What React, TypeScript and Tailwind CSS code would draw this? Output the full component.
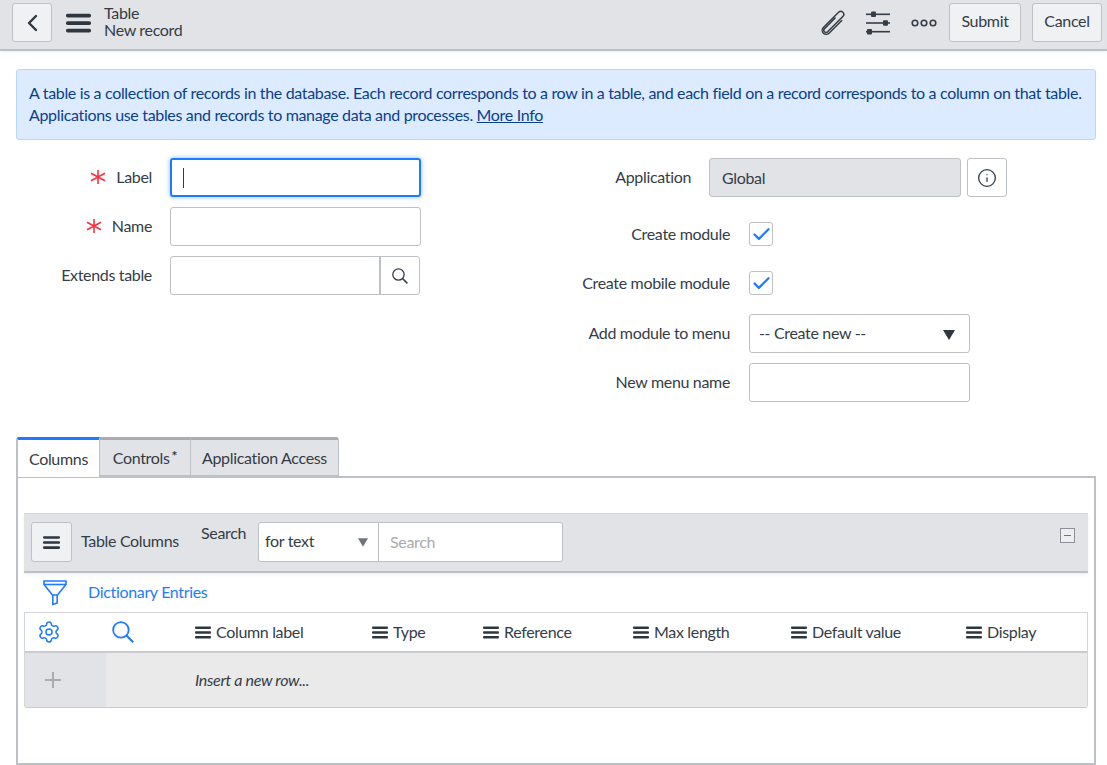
import React from 'react';
import { Check, Info, Settings } from 'lucide-react';

function Bars({ className }: { className: string }) {
  return (
    <svg viewBox="0 0 16 12" className={className}>
      <rect x="0" y="0" width="16" height="2.4" rx="1" fill="currentColor" />
      <rect x="0" y="4.8" width="16" height="2.4" rx="1" fill="currentColor" />
      <rect x="0" y="9.6" width="16" height="2.4" rx="1" fill="currentColor" />
    </svg>
  );
}

function Back() {
  return (
    <svg viewBox="0 0 12 18" className="w-[12px] h-[18px] text-[#2e3640]" fill="none" stroke="currentColor" strokeWidth="2.4" strokeLinecap="round" strokeLinejoin="round">
      <path d="M10 2 3 9l7 7" />
    </svg>
  );
}

function Paperclip() {
  return (
    <svg viewBox="0 0 26 26" className="w-[26px] h-[26px] text-[#343d47]" fill="none" stroke="currentColor" strokeWidth="1.5" strokeLinecap="round">
      <g transform="rotate(45 13 13)">
        <path d="M11 8v15a2.2 2.2 0 0 0 4.4 0V1.5a3 3 0 0 0-6 0V23a4 4 0 0 0 8 0V5" />
      </g>
    </svg>
  );
}

function Sliders() {
  return (
    <svg viewBox="0 0 24 24" className="w-[24px] h-[24px] text-[#343d47]" fill="currentColor">
      <rect x="0" y="2.5" width="24" height="1.6" />
      <rect x="5" y="0.5" width="5" height="5.5" rx="1" />
      <rect x="0" y="11.2" width="24" height="1.6" />
      <rect x="17" y="9.2" width="5" height="5.5" rx="1" />
      <rect x="0" y="19.9" width="24" height="1.6" />
      <rect x="1" y="18" width="5" height="5.5" rx="1" />
    </svg>
  );
}

function Dots() {
  return (
    <svg viewBox="0 0 26 8" className="w-[26px] h-[8px] text-[#343d47]" fill="none" stroke="currentColor" strokeWidth="1.6">
      <circle cx="4" cy="4" r="2.8" />
      <circle cx="13" cy="4" r="2.8" />
      <circle cx="22" cy="4" r="2.8" />
    </svg>
  );
}

function Funnel() {
  return (
    <svg viewBox="0 0 24 26" className="w-[24px] h-[26px] text-[#1f7aff]" fill="none" stroke="currentColor" strokeWidth="1.6">
      <path d="M1 1h22v3.5L14.5 15h-5L1 4.5z" />
      <path d="M1 4.5h22" />
      <path d="M9.8 15v9.5l4.4-1.5V15" />
    </svg>
  );
}

function Magnifier({ className }: { className: string }) {
  return (
    <svg viewBox="0 0 21 21" className={className} fill="none" stroke="currentColor" strokeWidth="1.7">
      <circle cx="8.5" cy="8.5" r="7.4" />
      <path d="m13.8 13.8 6.4 6.4" strokeWidth="2" />
    </svg>
  );
}

function Caret({ className }: { className: string }) {
  return (
    <svg viewBox="0 0 12 10" className={className} fill="currentColor">
      <path d="M0 0h12L6 10z" />
    </svg>
  );
}

function TextInput({ className = '' }: { className?: string }) {
  return <div className={`h-[39px] bg-white border-[1.5px] border-[#bdc0c4] rounded-[3px] ${className}`} />;
}

function RequiredMark() {
  return (
    <svg viewBox="0 0 16 14" className="w-[16px] h-[14px] mr-[10px] text-[#f9323f]" fill="none" stroke="currentColor" strokeWidth="1.6">
      <path d="M8 0v14M1 3.2l14 7.6M15 3.2 1 10.8" />
    </svg>
  );
}

function Check2() {
  return (
    <div className="w-[24px] h-[24px] bg-white border-[1.5px] border-[#bdc0c4] rounded-[3px] flex items-center justify-center">
      <Check className="w-[21px] h-[21px] text-[#1f7aff]" strokeWidth={2.6} />
    </div>
  );
}

const columns = [
  { label: 'Column label', width: 'w-[177px]' },
  { label: 'Type', width: 'w-[111px]' },
  { label: 'Reference', width: 'w-[150px]' },
  { label: 'Max length', width: 'w-[158px]' },
  { label: 'Default value', width: 'w-[175px]' },
  { label: 'Display', width: 'w-[100px]' },
];

export default function App() {
  return (
    <div className="w-[1107px] h-[765px] overflow-hidden bg-white text-[#343d47] text-[16px] leading-[22px] tracking-[-0.33px] font-['Lato','Noto_Sans',sans-serif]">
      {/* top bar */}
      <div className="h-[51px] bg-[#e2e3e6] border-b-2 border-[#bdc0c4] pt-[3px] pl-[12px] pr-[5px] shadow-[0_1px_3px_rgba(0,0,0,0.08)]">
        <div className="h-[39px] flex items-center">
          <button className="w-[40px] h-[39px] bg-[#f0f1f3] border-[1.5px] border-[#bdc0c4] rounded-[3px] flex items-center justify-center">
            <Back />
          </button>
          <Bars className="w-[25px] h-[20px] ml-[14px] text-[#2e3640]" />
          <div className="ml-[13px] pb-[4px] leading-[17px]">
            <div>Table</div>
            <div>New record</div>
          </div>
          <div className="ml-auto flex items-center">
            <Paperclip />
            <div className="ml-[20px]"><Sliders /></div>
            <div className="ml-[21px]"><Dots /></div>
            <button className="ml-[12px] w-[72px] h-[39px] pb-[3px] bg-[#f0f1f3] border-[1.5px] border-[#bdc0c4] rounded-[3px]">Submit</button>
            <button className="ml-[11px] w-[70px] h-[39px] pb-[3px] bg-[#f0f1f3] border-[1.5px] border-[#bdc0c4] rounded-[3px]">Cancel</button>
          </div>
        </div>
      </div>

      <div className="pl-[16px]">
        {/* info banner */}
        <div className="mt-[18px] h-[71px] w-[1080px] bg-[#dcebff] border-[1.5px] border-[#b9d6fb] rounded-[3px] pl-[12px] pt-[12px] text-[#0b3f8c] whitespace-nowrap">
          <div>A table is a collection of records in the database. Each record corresponds to a row in a table, and each field on a record corresponds to a column on that table.</div>
          <div>Applications use tables and records to manage data and processes. <span className="underline">More Info</span></div>
        </div>

        {/* form */}
        <div className="mt-[18px] flex h-[279px]">
          <div className="w-[405px] flex flex-col gap-[10px]">
            <div className="flex items-center">
              <div className="w-[136px] pb-[2px] flex items-center justify-end"><RequiredMark />Label</div>
              <div className="ml-[18px] w-[251px] h-[39px] bg-white border-2 border-[#1f7aff] rounded-[3px] shadow-[0_0_5px_rgba(31,122,255,0.5)] flex items-center pl-[11px]">
                <div className="w-[1px] h-[20px] bg-[#343d47]" />
              </div>
            </div>
            <div className="flex items-center">
              <div className="w-[136px] pb-[2px] flex items-center justify-end"><RequiredMark />Name</div>
              <TextInput className="ml-[18px] w-[251px]" />
            </div>
            <div className="flex items-center">
              <div className="w-[136px] pb-[2px] text-right">Extends table</div>
              <div className="ml-[18px] w-[250px] h-[39px] flex bg-white border-[1.5px] border-[#bdc0c4] rounded-[3px]">
                <div className="w-[210px] border-r-2 border-[#bdc0c4]" />
                <div className="flex-1 flex items-center justify-center">
                  <Magnifier className="w-[16px] h-[16px] text-[#343d47]" />
                </div>
              </div>
            </div>
          </div>

          <div className="flex-1 flex flex-col">
            <div className="flex items-center">
              <div className="w-[270px] pb-[2px] text-right">Application</div>
              <div className="ml-[18px] w-[252px] h-[39px] bg-[#e2e3e6] border-[1.5px] border-[#bdc0c4] rounded-[3px] flex items-center pl-[12px]">Global</div>
              <div className="ml-[6px] w-[40px] h-[39px] bg-white border-[1.5px] border-[#bdc0c4] rounded-[3px] flex items-center justify-center">
                <Info className="w-[20px] h-[20px]" strokeWidth={1.6} />
              </div>
            </div>
            <div className="mt-[25px] flex items-center">
              <div className="w-[309px] text-right">Create module</div>
              <div className="ml-[19px]"><Check2 /></div>
            </div>
            <div className="mt-[25px] flex items-center">
              <div className="w-[309px] text-right">Create mobile module</div>
              <div className="ml-[19px]"><Check2 /></div>
            </div>
            <div className="mt-[19px] flex items-center">
              <div className="w-[309px] pb-[2px] text-right">Add module to menu</div>
              <div className="ml-[19px] w-[221px] h-[39px] bg-white border-[1.5px] border-[#bdc0c4] rounded-[3px] flex items-center justify-between pl-[9px] pr-[14px]">
                <span className="pb-[2px]">-- Create new --</span>
                <Caret className="w-[12px] h-[10px] text-[#2e3640] mt-[3px]" />
              </div>
            </div>
            <div className="mt-[10px] flex items-center">
              <div className="w-[309px] pb-[2px] text-right">New menu name</div>
              <TextInput className="ml-[19px] w-[221px]" />
            </div>
          </div>
        </div>

        {/* tabs */}
        <div className="w-[1080px]">
          <div className="flex h-[40px] relative z-10">
            <div className="w-[84px] h-[40px] bg-white border-l-2 border-l-[#bdc0c4] border-t-[3px] border-t-[#1f7aff] rounded-tl-[3px] border-r-[1.5px] border-r-[#bdc0c4] flex items-center justify-center">Columns</div>
            <div className="w-[91px] h-[39px] bg-[#e2e3e6] border-t-[3px] border-t-[#a9acb1] border-r-[1.5px] border-r-[#bdc0c4] border-b border-b-[#bdc0c4] flex items-center justify-center">Controls<span className="ml-[2px] text-[14px] font-bold -mt-[4px]">*</span></div>
            <div className="w-[148px] h-[39px] bg-[#e2e3e6] border-t-[3px] border-t-[#a9acb1] border-r-[1.5px] border-r-[#bdc0c4] border-b border-b-[#bdc0c4] rounded-tr-[3px] flex items-center justify-center">Application Access</div>
          </div>
          <div className="-mt-[1px] h-[289px] border-2 border-[#bdc0c4] px-[6px] pt-[35px]">
            {/* list toolbar */}
            <div className="h-[60px] bg-[#e2e3e6] border-t border-t-[#d3d5d8] border-b-2 border-b-[#bdc0c4] flex items-start pt-[8px] pl-[7px] shadow-[0_2px_3px_rgba(0,0,0,0.06)]">
              <button className="w-[41px] h-[40px] bg-[#f0f1f3] border-[1.5px] border-[#bdc0c4] rounded-[3px] flex items-center justify-center">
                <Bars className="w-[17px] h-[13px] text-[#2e3640]" />
              </button>
              <div className="ml-[9px] mt-[8px] w-[120px]">Table Columns</div>
              <div className="w-[57px]">Search</div>
              <div className="w-[305px] h-[40px] flex bg-white border-[1.5px] border-[#bdc0c4] rounded-[3px]">
                <div className="w-[120px] border-r border-[#bdc0c4] flex items-center justify-between pl-[6px] pr-[10px]">
                  <span className="pb-[2px]">for text</span>
                  <Caret className="w-[10px] h-[9px] text-[#70757c]" />
                </div>
                <div className="pl-[11px] flex items-center text-[#a8abb0]">Search</div>
              </div>
              <div className="ml-auto mr-[13px] mt-[6px] w-[15px] h-[15px] border border-[#8d9197] bg-[#eceef0] flex items-center justify-center">
                <div className="w-[7px] h-[1.5px] bg-[#70757c]" />
              </div>
            </div>

            {/* filter */}
            <div className="h-[39px] flex items-center pl-[19px]">
              <Funnel />
              <span className="ml-[21px] pb-[2px] text-[#1f7aff]">Dictionary Entries</span>
            </div>

            {/* table */}
            <div className="border-[1.5px] border-[#d3d5d8] border-b-[#c9cbcf] rounded-b-[3px]">
              <div className="h-[40px] flex items-center border-b-2 border-[#c9cbcf]">
                <div className="w-[85px] pl-[12px]"><Settings className="w-[24px] h-[24px] text-[#1f7aff]" strokeWidth={1.5} /></div>
                <div className="w-[85px] pl-[2px]"><Magnifier className="w-[22px] h-[22px] text-[#1f7aff]" /></div>
                {columns.map((c) => (
                  <div key={c.label} className={`${c.width} flex items-center`}>
                    <Bars className="w-[16px] h-[13px] mr-[5px] text-[#2e3640]" />
                    <span>{c.label}</span>
                  </div>
                ))}
              </div>
              <div className="h-[54px] flex bg-[#eaeaeb]">
                <div className="w-[81px] bg-[#e2e3e6] flex items-center pl-[20px]">
                  <svg viewBox="0 0 16 16" className="w-[16px] h-[16px] text-[#a8abb0]" fill="none" stroke="currentColor" strokeWidth="2">
                    <path d="M8 0v16M0 8h16" />
                  </svg>
                </div>
                <div className="pl-[89px] flex items-center italic">Insert a new row...</div>
              </div>
            </div>
          </div>
        </div>
      </div>
    </div>
  );
}
